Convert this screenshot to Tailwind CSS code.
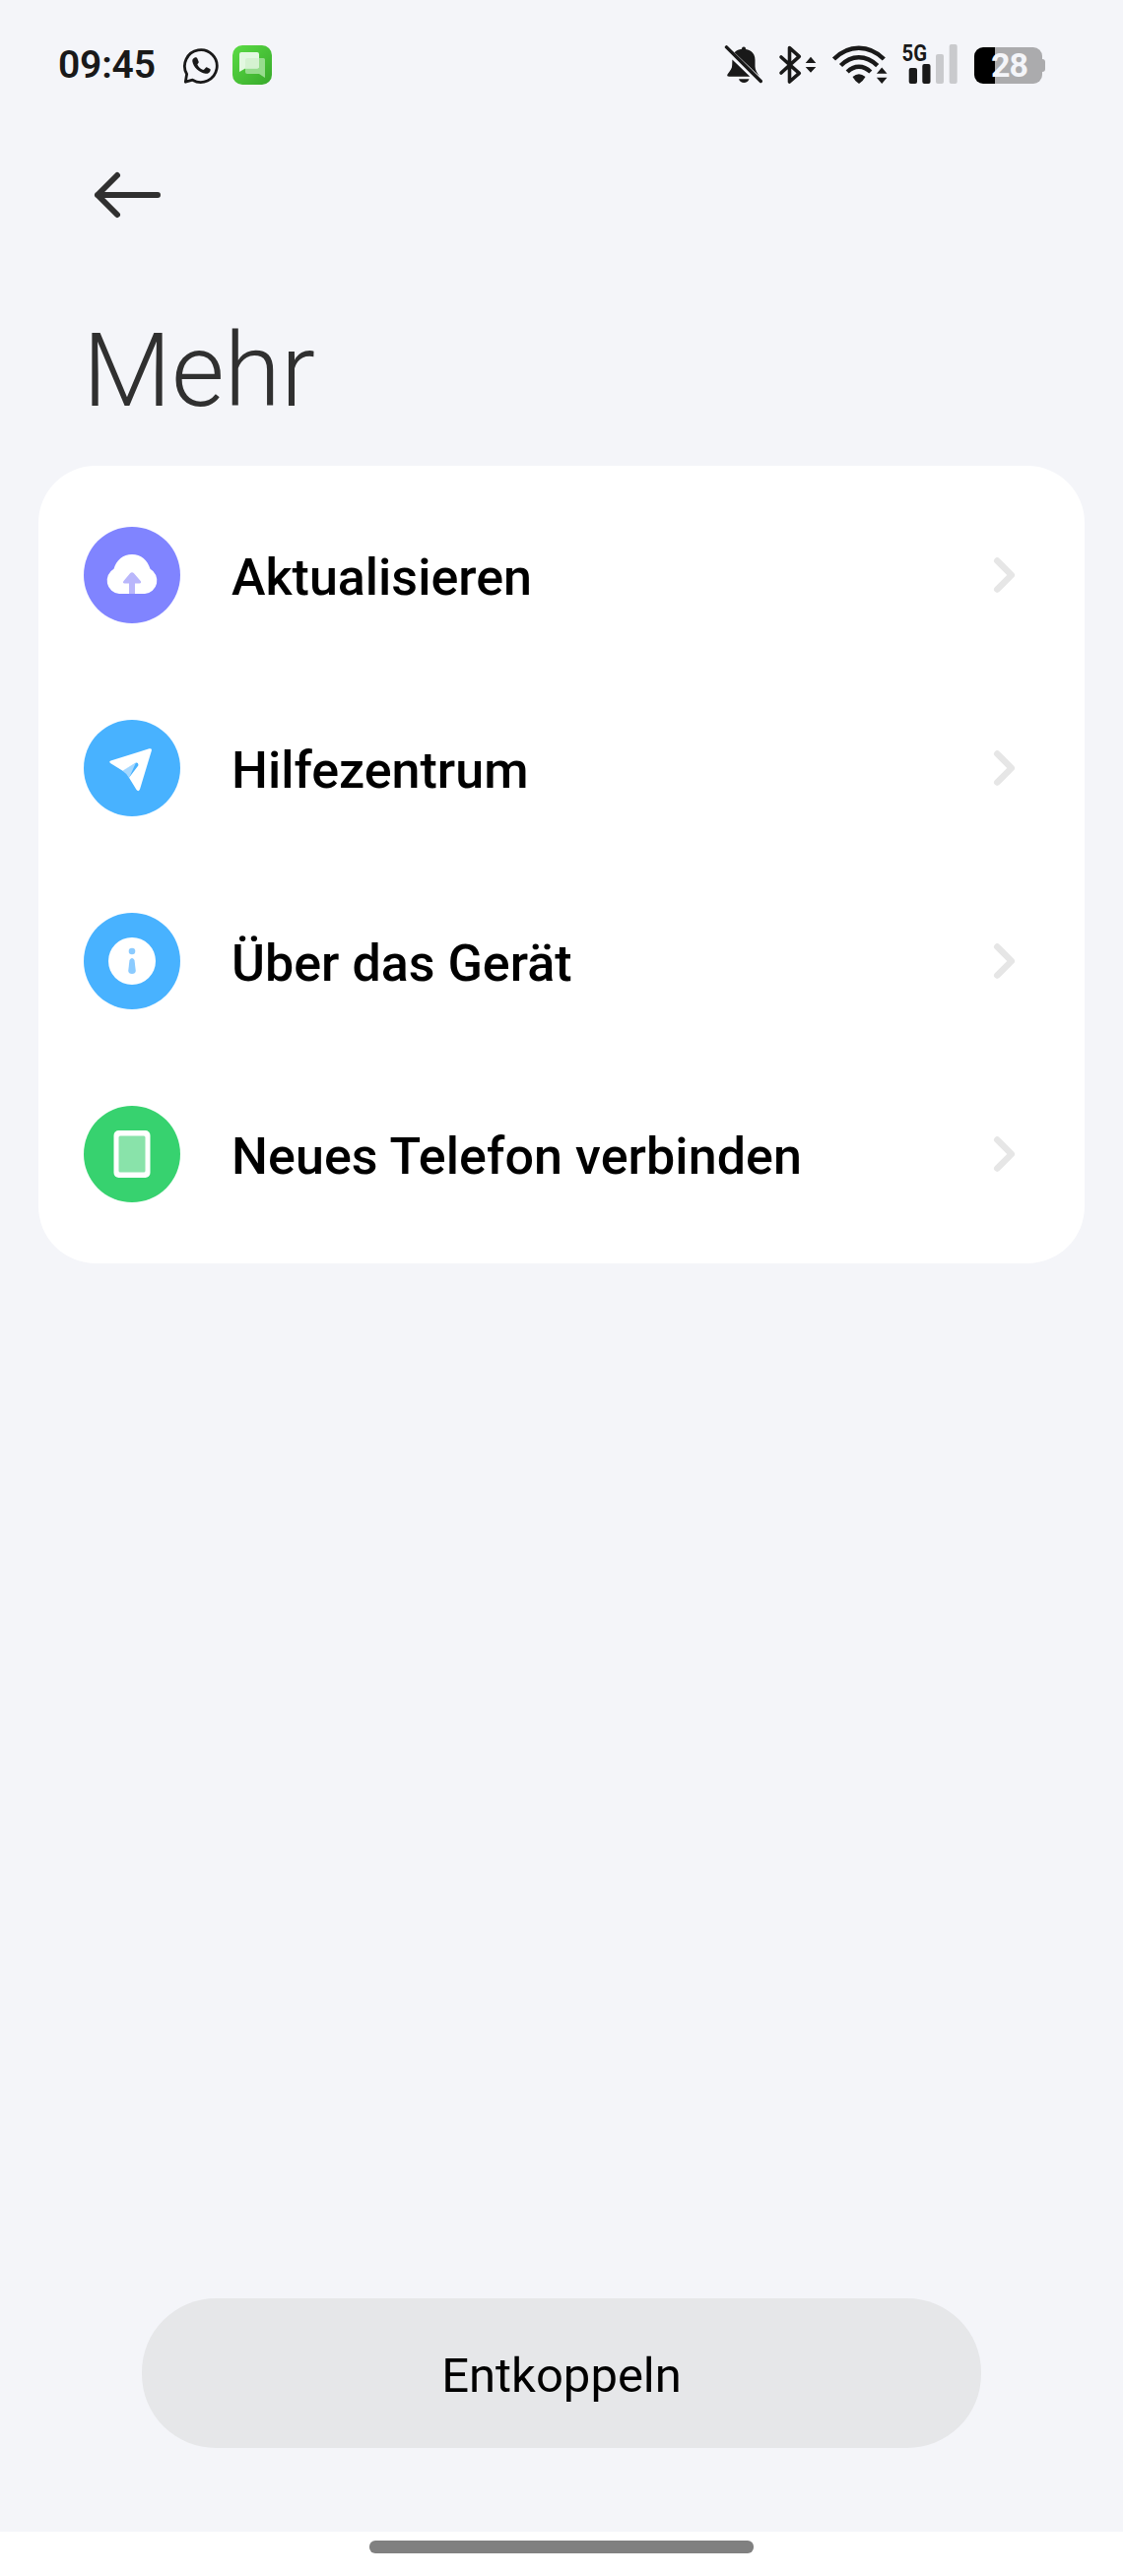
<!DOCTYPE html>
<html lang="de">
<head>
    <meta charset="UTF-8">
    <meta name="viewport" content="width=device-width, initial-scale=1.0">
    <title>Mehr</title>
    <script src="https://cdn.jsdelivr.net/npm/@tailwindcss/browser@4"></script>
</head>
<body class="bg-[#f4f5f9] font-['Roboto',sans-serif]">
<div class="flex h-[2616px] w-[1140px] flex-col overflow-hidden">

    <!-- Status bar -->
    <header class="flex h-[132px] shrink-0 items-center justify-between pr-[79px] pl-[59px] text-[#191919]">
        <div class="flex items-center">
            <span class="w-[126px] text-[39px] leading-none font-semibold tracking-[-0.2px] whitespace-nowrap">09:45</span>
            <svg class="h-10 w-10" viewBox="185 46 40 40" fill="none">
                <path d="M188.3 83.2L189.6 75.2A16.4 16.4 0 1 1 195.5 81.2Z" stroke="#191919" stroke-width="2.8" stroke-linejoin="round"/>
                <path d="M197.6 58.6c1.500-.6 2.500 0 3 1.300l1 2.500c.3.800 0 1.300-.4 1.800-.7.900-1 1.300-.5 2.100 1.200 2 2.900 3.500 5 4.500.8.300 1.200.1 1.800-.6l1.100-1.300c.5-.6 1-.7 1.700-.4l2.500 1.300c.8.4 1 .8.800 1.600-.5 2.400-2.600 3.600-4.900 3.400-6.300-.7-12.400-6.500-13.400-12.500-.2-1.500.7-3 2.300-3.700z" fill="#191919"/>
            </svg>
            <svg class="ml-[11px] h-10 w-10" viewBox="0 0 40 40">
                <defs>
                    <linearGradient id="app" x1="0" y1="0" x2="1" y2="1">
                        <stop offset="0" stop-color="#5bdc45"/>
                        <stop offset="1" stop-color="#37a92b"/>
                    </linearGradient>
                </defs>
                <rect width="40" height="40" rx="10" fill="url(#app)"/>
                <path d="M15 13h16.500a1.500 1.500 0 0 1 1.500 1.500V33l-6-4H15a2 2 0 0 1-2-2V15a2 2 0 0 1 2-2z" fill="#97dc8e"/>
                <path d="M9 7h16a2 2 0 0 1 2 2v12.500a2 2 0 0 1-2 2H13L7 27V9a2 2 0 0 1 2-2z" fill="#e3f8e1"/>
                <path d="M15 13h12v8.500a2 2 0 0 1-2 2H13V15a2 2 0 0 1 2-2z" fill="#d5f2d1"/>
            </svg>
        </div>

        <div class="flex items-center">
            <!-- muted bell -->
            <svg class="h-10 w-10" viewBox="735 46 40 40" fill="#191919">
                <path d="M745.500 53.200C748 51 750 50.300 753 49.800V49.500a2 2 0 0 1 4 0V49.900C763 50.800 766.500 55 766.500 61V67.500C766.500 71 768.500 74 771 77.500z"/>
                <path d="M743.400 60.500L761.300 77.700H740.200Q737.500 77.700 738.500 75.500C741.500 71.500 743.200 69.500 743.200 66z"/>
                <path d="M750 80.200H760.500Q759 84 755.200 84T750 80.200z"/>
                <path d="M737.500 47.900L772.300 82.500" stroke="#191919" stroke-width="3.400" stroke-linecap="round"/>
            </svg>
            <!-- bluetooth -->
            <svg class="ml-[15px] h-10 w-10" viewBox="790 46 40 40" fill="none">
                <path d="M793 58L811.300 74.300 801.500 83V48.500L811.300 57.300 793 74" stroke="#191919" stroke-width="3.600" stroke-linecap="round" stroke-linejoin="round"/>
                <path d="M823 57.800L828.300 63.900H817.700zM823 73.800L828.300 67.900H817.700z" fill="#191919"/>
            </svg>
            <!-- wifi -->
            <svg class="ml-[14px] h-10 w-[58px]" viewBox="844 46 58 40" fill="none">
                <g stroke="#191919" stroke-width="4.400">
                    <path d="M846.500 60Q857.500 48.700 871.800 48.700T897.300 60"/>
                    <path d="M853.500 66.600Q861.500 58.200 871.800 58.200T890.700 66.600"/>
                    <path d="M860.200 73Q865.500 67.700 871.900 67.700T883.800 73"/>
                </g>
                <path d="M865.500 78Q871.900 72.500 878.500 78Q876.500 82 872 85Q867.500 82 865.500 78z" fill="#191919"/>
                <path d="M895.200 68.500L900.500 74.800H889.900zM895.200 84.900L900.500 78.700H889.900z" fill="#191919"/>
            </svg>
            <!-- signal -->
            <svg class="ml-[13px] h-[60px] w-[58px]" viewBox="915 36 58 60">
                <text x="915.500" y="61.700" font-family="Roboto" font-size="23" font-weight="700" fill="#191919" textLength="25.500" lengthAdjust="spacingAndGlyphs">5G</text>
                <rect x="922.700" y="69" width="8.300" height="16" rx="2" fill="#191919"/>
                <rect x="936.300" y="65" width="8.200" height="20" rx="2" fill="#191919"/>
                <rect x="950" y="55" width="8" height="30" rx="2" fill="#c9cacd"/>
                <rect x="963.700" y="45" width="8" height="40" rx="2" fill="#c9cacd"/>
            </svg>
            <!-- battery -->
            <div class="ml-4 flex items-center">
                <div class="flex h-[37px] w-[69px] items-center overflow-hidden rounded-[9px] bg-[linear-gradient(90deg,#000_21px,#ababad_21px)] pl-[17px] text-[34px] leading-none font-bold tracking-[-1px] text-[#f4f5f9]">28</div>
                <div class="h-[13px] w-[3px] rounded-r-[3px] bg-[#ababad]"></div>
            </div>
        </div>
    </header>

    <!-- Back -->
    <nav class="flex h-[132px] shrink-0 items-center pl-[93px]">
        <button>
            <svg class="h-[52px] w-[74px]" viewBox="0 0 74 52" fill="none" stroke="#303030" stroke-width="6" stroke-linecap="round" stroke-linejoin="round">
                <path d="M26 6L6 26 26 46M6 26H67"/>
            </svg>
        </button>
    </nav>

    <h1 class="h-[209px] shrink-0 pt-[50px] pl-[84px] text-[104px] leading-[125px] font-light text-[#303030]">Mehr</h1>

    <!-- Menu -->
    <ul class="mx-[39px] h-[810px] shrink-0 rounded-[58px] bg-white py-[13px] text-[52px] font-medium text-black">
        <li class="flex h-[196px] items-center pr-[68px] pl-[46px]">
            <svg class="h-[98px] w-[98px]" viewBox="0 0 98 98">
                <circle cx="49" cy="49" r="49" fill="#8084ff"/>
                <path d="M36 68a13.500 13.500 0 0 1-5.500-25.200C33 34 40 28 49 28s16 6 18.500 14.800A13.500 13.500 0 0 1 62 68z" fill="#fff"/>
                <path d="M46 68V57.500H41.500Q39 57 40.500 55L47 47.200Q49 45.300 51 47.200L57.700 55Q59 57 56.500 57.500H52V68z" fill="#b9b6fb"/>
            </svg>
            <span class="ml-[52px] flex-1 pt-[5px]">Aktualisieren</span>
            <svg class="h-[42px] w-[27px]" viewBox="0 0 27 42" fill="none" stroke="#e6e6e6" stroke-width="6.500" stroke-linecap="round" stroke-linejoin="round"><path d="M6.300 6.500L20.800 21 6.300 35.500"/></svg>
        </li>
        <li class="flex h-[196px] items-center pr-[68px] pl-[46px]">
            <svg class="h-[98px] w-[98px]" viewBox="0 0 98 98">
                <circle cx="49" cy="49" r="49" fill="#48b2ff"/>
                <path d="M39 51.500L53 43.500 46 59Q43 54 39 51.500z" fill="#a5d8ff"/>
                <path d="M27.500 41.500L66.500 29.300Q69.500 28.800 68.800 31.500L57 70.500Q55.500 73.500 53.500 71L46 58.800 55.300 46.500Q56 43 52.500 43.700L39.500 51.800 27 44Q25.300 42.300 27.500 41.500z" fill="#fff"/>
            </svg>
            <span class="ml-[52px] flex-1 pt-[5px]">Hilfezentrum</span>
            <svg class="h-[42px] w-[27px]" viewBox="0 0 27 42" fill="none" stroke="#e6e6e6" stroke-width="6.500" stroke-linecap="round" stroke-linejoin="round"><path d="M6.300 6.500L20.800 21 6.300 35.500"/></svg>
        </li>
        <li class="flex h-[196px] items-center pr-[68px] pl-[46px]">
            <svg class="h-[98px] w-[98px]" viewBox="0 0 98 98">
                <circle cx="49" cy="49" r="49" fill="#48b2ff"/>
                <circle cx="49" cy="49" r="24" fill="#fff"/>
                <circle cx="49" cy="39" r="3.300" fill="#8bcbff"/>
                <path d="M46.500 48Q49 44 51.500 48L52.800 59Q52.500 62 49 62T45.200 59z" fill="#8bcbff"/>
            </svg>
            <span class="ml-[52px] flex-1 pt-[5px]">Über das Gerät</span>
            <svg class="h-[42px] w-[27px]" viewBox="0 0 27 42" fill="none" stroke="#e6e6e6" stroke-width="6.500" stroke-linecap="round" stroke-linejoin="round"><path d="M6.300 6.500L20.800 21 6.300 35.500"/></svg>
        </li>
        <li class="flex h-[196px] items-center pr-[68px] pl-[46px]">
            <svg class="h-[98px] w-[98px]" viewBox="0 0 98 98">
                <circle cx="49" cy="49" r="49" fill="#37d26f"/>
                <rect x="30.500" y="25" width="37" height="48" rx="5" fill="#fff"/>
                <rect x="35.500" y="30.500" width="27" height="37" rx="1.500" fill="#89e3aa"/>
            </svg>
            <span class="ml-[52px] flex-1 pt-[5px] tracking-[0.08px]">Neues Telefon verbinden</span>
            <svg class="h-[42px] w-[27px]" viewBox="0 0 27 42" fill="none" stroke="#e6e6e6" stroke-width="6.500" stroke-linecap="round" stroke-linejoin="round"><path d="M6.300 6.500L20.800 21 6.300 35.500"/></svg>
        </li>
    </ul>

    <button class="mx-auto mt-auto mb-[85px] h-[152px] w-[852px] shrink-0 rounded-[75px] bg-[#e6e7e9] pt-[5px] text-[49px] text-black">Entkoppeln</button>

    <!-- Gesture bar -->
    <footer class="h-[45px] shrink-0 bg-white pt-[9px]">
        <div class="mx-auto h-[13px] w-[390px] rounded-[6px] bg-[#808080]"></div>
    </footer>
</div>
</body>
</html>
